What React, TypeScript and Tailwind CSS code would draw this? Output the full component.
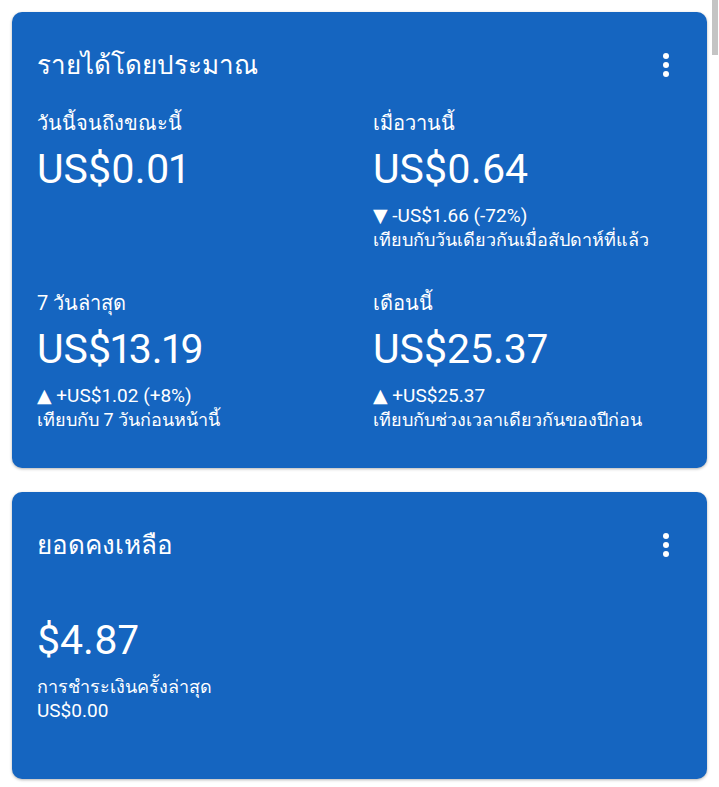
type Stat = {
  label: string
  amount: string
  delta?: string
  compare?: string
}

const stats: Stat[] = [
  { label: 'วันนี้จนถึงขณะนี้', amount: 'US$0.01' },
  {
    label: 'เมื่อวานนี้',
    amount: 'US$0.64',
    delta: '▼ -US$1.66 (-72%)',
    compare: 'เทียบกับวันเดียวกันเมื่อสัปดาห์ที่แล้ว',
  },
  {
    label: '7 วันล่าสุด',
    amount: 'US$13.19',
    delta: '▲ +US$1.02 (+8%)',
    compare: 'เทียบกับ 7 วันก่อนหน้านี้',
  },
  {
    label: 'เดือนนี้',
    amount: 'US$25.37',
    delta: '▲ +US$25.37',
    compare: 'เทียบกับช่วงเวลาเดียวกันของปีก่อน',
  },
]

function MoreButton() {
  return (
    <button className="flex size-8 items-center justify-center text-white">
      <svg width="8" height="26" viewBox="0 0 8 26" fill="currentColor">
        <circle cx="4" cy="4" r="3" />
        <circle cx="4" cy="13" r="3" />
        <circle cx="4" cy="22" r="3" />
      </svg>
    </button>
  )
}

function StatBlock({ stat }: { stat: Stat }) {
  return (
    <div className="min-h-[142px]">
      <p className="text-[20px] leading-[28px]">{stat.label}</p>
      <p className="mt-[10px] text-[41px] leading-[44px] proportional-nums">{stat.amount}</p>
      {stat.delta ? (
        <div className="mt-[13px]">
          <p className="text-[19px] leading-[24px]">{stat.delta}</p>
          <p className="text-[18px] leading-[23px]">{stat.compare}</p>
        </div>
      ) : null}
    </div>
  )
}

export default function App() {
  return (
    <div
      className="relative min-h-[787px] bg-white px-3 pt-3 pb-2 text-white"
      style={{ fontFamily: 'Roboto, "Noto Sans", "DejaVu Sans", sans-serif' }}
    >
      <div className="absolute top-0 right-[1px] h-[55px] w-[6px] bg-[#c4c4c4]" />

      <section className="rounded-[10px] bg-[#1565c0] px-[25px] pt-[36px] pb-[37px] shadow-[0_1px_3px_rgba(0,0,0,0.3)]">
        <div className="flex items-center justify-between">
          <h2 className="text-[26px] leading-[34px]">รายได้โดยประมาณ</h2>
          <MoreButton />
        </div>
        <div className="mt-[27px] grid grid-cols-2 gap-x-[27px] gap-y-[38px]">
          {stats.map((stat) => (
            <StatBlock key={stat.label} stat={stat} />
          ))}
        </div>
      </section>

      <section className="mt-[24px] min-h-[287px] rounded-[10px] bg-[#1565c0] px-[25px] pt-[36px] pb-[20px] shadow-[0_1px_3px_rgba(0,0,0,0.3)]">
        <div className="flex items-center justify-between">
          <h2 className="text-[26px] leading-[34px]">ยอดคงเหลือ</h2>
          <MoreButton />
        </div>
        <p className="mt-[56px] text-[41px] leading-[44px] proportional-nums">$4.87</p>
        <div className="mt-[13px]">
          <p className="text-[18px] leading-[24px]">การชำระเงินครั้งล่าสุด</p>
          <p className="text-[19px] leading-[24px]">US$0.00</p>
        </div>
      </section>
    </div>
  )
}
